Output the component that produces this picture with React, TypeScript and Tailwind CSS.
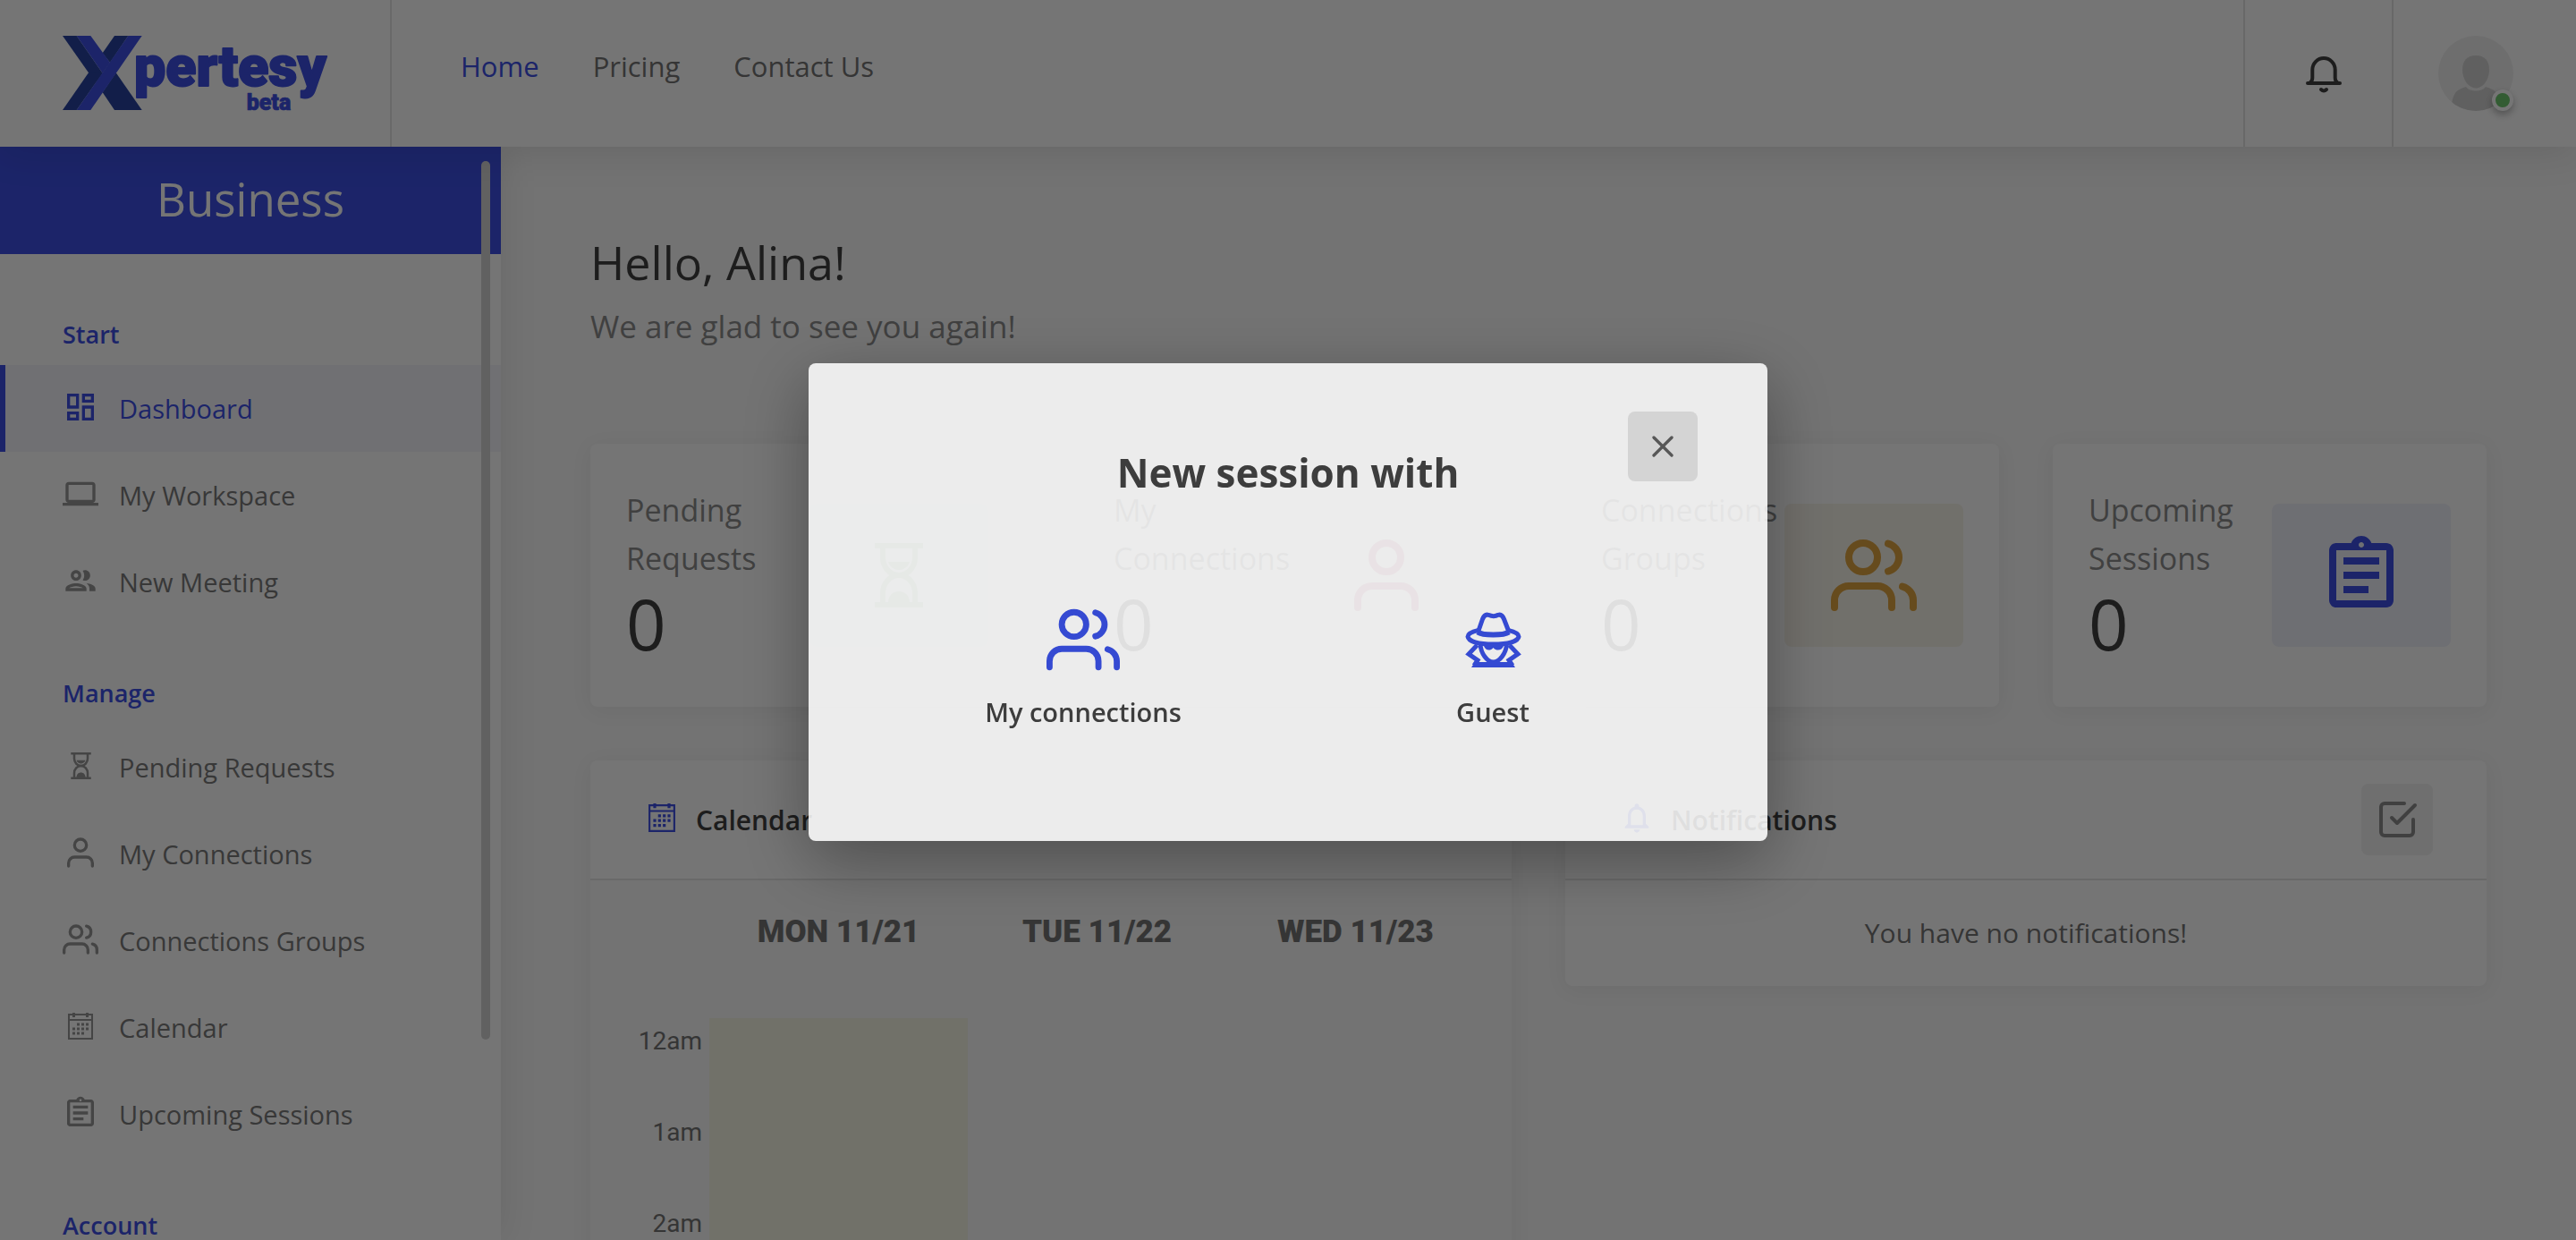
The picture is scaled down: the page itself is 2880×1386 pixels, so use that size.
import type { ReactNode } from "react";
import {
  MdOutlineAssignment,
  MdOutlineDashboard,
  MdOutlineGroup,
  MdOutlineLaptop,
  MdNotificationsNone,
} from "react-icons/md";
import { FiCheckSquare, FiUser, FiUsers, FiX } from "react-icons/fi";

function Hourglass({ className }: { className?: string }) {
  return (
    <svg viewBox="0 0 54 72" className={className} fill="none" stroke="currentColor" strokeWidth="6" aria-hidden="true">
      <path d="M0 3H54M0 69H54" />
      <path d="M9 3V16C9 27 17 36 27 36S45 27 45 16V3" />
      <path d="M9 69V56C9 45 17 36 27 36S45 45 45 56V69" />
      <path d="M15 21H39C37 27 32 30 27 30S17 27 15 21Z" fill="currentColor" stroke="none" />
      <path d="M15 67C15 59 20 54 27 54S39 59 39 67Z" fill="currentColor" stroke="none" />
    </svg>
  );
}

function CalendarIcon({ className }: { className?: string }) {
  return (
    <svg viewBox="0 0 28 30" className={className} fill="none" stroke="currentColor" strokeWidth="2" aria-hidden="true">
      <path d="M1 2H27V29H1ZM1 8H27" />
      <path d="M6.500 0V5M21.500 0V5" strokeWidth="3" />
      <path d="M10 13H24M5 18H24M5 23H19" strokeWidth="3" strokeDasharray="3 2" />
    </svg>
  );
}

function BellIcon() {
  return (
    <svg viewBox="0 0 40 42" className="h-[42px] w-10" fill="none" stroke="currentColor" strokeWidth="4" strokeLinecap="round" aria-hidden="true">
      <path d="M2 30H38" />
      <path d="M4.500 29.500C6.500 28.500 7.300 27 7.300 24V15A12.700 13 0 0 1 32.700 15V24C32.700 27 33.500 28.500 35.500 29.500" />
      <path d="M17 37Q20 40 23 37" />
    </svg>
  );
}

function GuestIcon() {
  return (
    <svg viewBox="0 0 63 62" className="h-[62px] w-[63px]" fill="none" stroke="currentColor" strokeWidth="5" strokeLinejoin="round" aria-hidden="true">
      <path d="M15 21L19.500 8C21 4 23 2.500 26 3.300C30 5 34 5 37 3.300C40 2.500 42 4 43.500 8L48.500 21" />
      <path d="M14 22.500C20 26.500 43 26.500 49 22.500" strokeWidth="6" />
      <path d="M15 20.500C6 22.500 3 24.500 3 27.500C4 33 15 36 31.500 36S59 33 60 27.500C60 24.500 57 22.500 48 20.500" />
      <path d="M17 36C17.500 46 24.500 56 31.500 56S46 46 46.500 36" />
      <path d="M16 34H47V38H43C41 43.500 35 44 31.500 40C28 44 23 43.500 21 38H16Z" fill="currentColor" stroke="none" />
      <path d="M13.500 37L4 47L14 54L10 60M49.500 37L59 47L49 54L53 60" strokeLinejoin="miter" />
      <path d="M7 62L11 56H52L56 62Z" fill="currentColor" stroke="none" />
    </svg>
  );
}

function Logo() {
  return (
    <svg viewBox="0 0 948 282" className="h-[94px] w-[316px]" role="img" aria-label="Xpertesy beta">
      <g fill="#28439f">
        <path d="M0 15H47L134 140L113 170L87 139Z" />
        <path d="M174 15H220L159 105L134 73Z" />
        <path d="M87 139L134 140L47 264H0Z" />
        <path d="M134 205L179 139L266 264H174Z" />
      </g>
      <g fill="#3d50e4">
        <path d="M47 15H94L159 105L134 140Z" />
        <path d="M220 15H266L94 264H47Z" />
      </g>
      <g fill="#3d50e4" stroke="#3d50e4" strokeLinejoin="round" fontWeight="900" fontFamily="Roboto, sans-serif">
        <text x="240" y="183" fontSize="188" strokeWidth="6">pertesy</text>
        <text x="617" y="264" fontSize="75" strokeWidth="2">beta</text>
      </g>
    </svg>
  );
}

function Avatar() {
  return (
    <svg viewBox="0 0 84 84" className="size-[84px]" aria-hidden="true">
      <clipPath id="avatar-clip">
        <circle cx="42" cy="42" r="42" />
      </clipPath>
      <g clipPath="url(#avatar-clip)">
        <rect width="84" height="84" fill="#f0f0f0" />
        <path d="M42 22C52 22 57 28 57 38C57 49 50 58.500 42 58.500S27 49 27 38C27 28 32 22 42 22Z" fill="#d2d2d2" />
        <path d="M31 57C35 63 49 63 53 57C62 60 67 62 68 75V84H15V77C17 62 22 60 31 57Z" fill="#d2d2d2" />
      </g>
    </svg>
  );
}

type NavItem = { label: string; icon: ReactNode; active?: boolean };

const startItems: NavItem[] = [
  { label: "Dashboard", icon: <MdOutlineDashboard className="size-10" />, active: true },
  { label: "My Workspace", icon: <MdOutlineLaptop className="size-10" /> },
  { label: "New Meeting", icon: <MdOutlineGroup className="size-10" /> },
];

const manageItems: NavItem[] = [
  { label: "Pending Requests", icon: <Hourglass className="h-[30px] w-[23px]" /> },
  { label: "My Connections", icon: <FiUser className="size-10" /> },
  { label: "Connections Groups", icon: <FiUsers className="size-10" /> },
  { label: "Calendar", icon: <CalendarIcon className="h-[30px] w-7" /> },
  { label: "Upcoming Sessions", icon: <MdOutlineAssignment className="size-10" /> },
];

function NavList({ items }: { items: NavItem[] }) {
  return (
    <ul>
      {items.map((item) => (
        <li key={item.label}>
          <a
            href="#"
            className={
              item.active
                ? "flex h-[97px] items-center gap-[23px] border-l-[6px] border-[#3d50e4] bg-[#f5f5fb] pl-16 text-[29px] text-[#3d50e4]"
                : "flex h-[97px] items-center gap-[23px] border-l-[6px] border-transparent pl-16 text-[29px] text-[#7a7a7a]"
            }
          >
            <span className={item.active ? "mb-1 flex w-10 justify-center" : "mb-1 flex w-10 justify-center text-[#969696]"}>
              {item.icon}
            </span>
            {item.label}
          </a>
        </li>
      ))}
    </ul>
  );
}

function NavHeading({ children }: { children: ReactNode }) {
  return <h3 className="px-[70px] pt-14 pb-3.5 text-[27px] leading-10 font-semibold text-[#3d50e4]">{children}</h3>;
}

const stats = [
  { label: "Pending Requests", icon: <Hourglass className="h-[72px] w-[54px]" />, box: "bg-[#eff8f3] text-[#9dcca6]" },
  { label: "My Connections", icon: <FiUser className="size-24" />, box: "bg-[#fbf7f8] text-[#c9708f]" },
  { label: "Connections Groups", icon: <FiUsers className="size-24" />, box: "bg-[#f7f4ea] text-[#dfa33f]" },
  { label: "Upcoming Sessions", icon: <MdOutlineAssignment className="size-24" />, box: "bg-[#eff1fb] text-[#3d50e4]" },
];

const days = ["MON 11/21", "TUE 11/22", "WED 11/23"];
const hours = ["12am", "1am", "2am"];

export default function App() {
  return (
    <div className="flex h-screen flex-col overflow-hidden bg-[#fafafa] font-['Open_Sans',sans-serif] text-[#414141]">
      <header className="relative z-10 flex h-[164px] shrink-0 bg-white shadow-[0_8px_40px_rgba(0,0,0,0.1)]">
        <a href="#" className="flex w-[438px] items-center border-r-2 border-[#e4e4e4] pl-[70px]">
          <Logo />
        </a>
        <nav className="flex flex-1 gap-[60px] pt-[54px] pl-[77px] text-[31px] leading-10 text-[#757575]">
          <a href="#" className="h-10 text-[#3d50e4]">Home</a>
          <a href="#" className="h-10">Pricing</a>
          <a href="#" className="h-10">Contact Us</a>
        </nav>
        <button aria-label="Notifications" className="flex w-[166px] items-center justify-center border-l-2 border-[#e2e2e2] pt-1 pl-3">
          <BellIcon />
        </button>
        <div className="flex w-[206px] items-center border-l-2 border-[#e2e2e2] pl-[50px]">
          <button aria-label="Account" className="relative">
            <Avatar />
            <span className="absolute right-0 bottom-0 size-6 rounded-full border-4 border-white bg-[#6fc86f] shadow-[0_4px_8px_rgba(0,0,0,0.3)]" />
          </button>
        </div>
      </header>

      <div className="flex min-h-0 flex-1">
        <aside className="relative w-[560px] shrink-0 overflow-hidden bg-white shadow-[0_0_40px_rgba(0,0,0,0.1)]">
          <h2 className="flex h-[120px] items-center justify-center bg-[#3d50e4] pb-1 text-[51px] text-white">Business</h2>
          <div className="pt-3.5">
            <NavHeading>Start</NavHeading>
            <NavList items={startItems} />
            <NavHeading>Manage</NavHeading>
            <NavList items={manageItems} />
            <NavHeading>Account</NavHeading>
          </div>
          <div className="absolute top-4 right-3 h-[982px] w-2.5 rounded-full bg-[#d4d4d4]" />
        </aside>

        <main className="flex-1 overflow-hidden px-[100px] pt-24">
          <h1 className="text-[52px] leading-[66px]">Hello, Alina!</h1>
          <p className="mt-3 text-[35px] leading-[54px] text-[#8c8c8c]">We are glad to see you again!</p>

          <section className="mt-[104px] grid grid-cols-4 gap-[60px]">
            {stats.map((stat) => (
              <div
                key={stat.label}
                className="flex h-[294px] items-center rounded-lg bg-white px-10 shadow-[0_4px_24px_rgba(0,0,0,0.06)]"
              >
                <div className="min-w-0 flex-1">
                  <p className="text-[34px] leading-[54px] text-[#8c8c8c]">{stat.label}</p>
                  <p className="text-[78px] leading-[92px]">0</p>
                </div>
                <div className={`flex h-40 w-[200px] shrink-0 items-center justify-center rounded-lg ${stat.box}`}>
                  {stat.icon}
                </div>
              </div>
            ))}
          </section>

          <div className="mt-[60px] grid grid-cols-2 items-start gap-[60px]">
            <section className="rounded-lg shadow-[0_4px_24px_rgba(0,0,0,0.06)]">
              <div className="flex h-[134px] items-center gap-[18px] rounded-t-lg border-b-2 border-[#e4e4e4] bg-white px-[60px]">
                <span className="flex w-10 justify-center pb-1 text-[#3d50e4]">
                  <CalendarIcon className="h-8 w-[30px]" />
                </span>
                <h2 className="text-[30px] font-semibold">Calendar</h2>
              </div>
              <div className="bg-[#fafafa] px-[30px] font-['Roboto',sans-serif] text-[#757575]">
                <table className="w-full table-fixed">
                  <thead>
                    <tr className="h-[154px] align-top">
                      <td className="w-[103px]" />
                      {days.map((day) => (
                        <th key={day} scope="col" className="pt-[38px] text-[35px] leading-10 font-black">{day}</th>
                      ))}
                    </tr>
                  </thead>
                  <tbody>
                    {hours.map((hour) => (
                      <tr key={hour} className="h-[102px] align-top">
                        <th scope="row" className="pt-1.5 pr-2 text-right text-[28px] leading-10 font-normal">{hour}</th>
                        <td className="bg-[#f6f6e4]" />
                        <td />
                        <td />
                      </tr>
                    ))}
                  </tbody>
                </table>
              </div>
            </section>

            <section className="rounded-lg bg-white shadow-[0_4px_24px_rgba(0,0,0,0.06)]">
              <div className="flex h-[134px] items-center gap-[18px] border-b-2 border-[#e4e4e4] px-[60px]">
                <MdNotificationsNone className="mb-1 size-10 text-[#3d50e4]" />
                <h2 className="flex-1 text-[30px] font-semibold">Notifications</h2>
                <button aria-label="Mark all as read" className="flex size-20 items-center justify-center rounded-lg bg-[#f1f1f1] text-[#8c8c8c]">
                  <FiCheckSquare className="size-12" />
                </button>
              </div>
              <p className="py-9 text-center text-[30px] leading-[46px] text-[#757575]">You have no notifications!</p>
            </section>
          </div>
        </main>
      </div>

      <div className="fixed inset-0 z-20 flex items-center justify-center bg-black/54 pb-10">
        <div
          role="dialog"
          aria-modal="true"
          aria-labelledby="session-title"
          className="w-[1072px] rounded-lg bg-white px-[78px] pt-[54px] pb-[124px] text-[#343434] opacity-86 shadow-[0_22px_76px_rgba(0,0,0,0.4)]"
        >
          <div className="grid grid-cols-[78px_1fr_78px] items-start">
            <h2 id="session-title" className="col-start-2 mt-[38px] text-center text-[44px] leading-[60px] font-bold">
              New session with
            </h2>
            <button aria-label="Close" className="flex size-[78px] items-center justify-center rounded-lg bg-[#e4e4e4] text-[#525252]">
              <FiX className="size-10" />
            </button>
          </div>
          <div className="mt-[116px] grid grid-cols-2 text-[29px] leading-10 font-semibold">
            <button className="flex flex-col items-center gap-5">
              <span className="flex h-[82px] items-center text-[#2a43e1]">
                <FiUsers className="size-[82px]" />
              </span>
              My connections
            </button>
            <button className="flex flex-col items-center gap-5">
              <span className="flex h-[82px] items-center text-[#2a43e1]">
                <GuestIcon />
              </span>
              Guest
            </button>
          </div>
        </div>
      </div>
    </div>
  );
}
